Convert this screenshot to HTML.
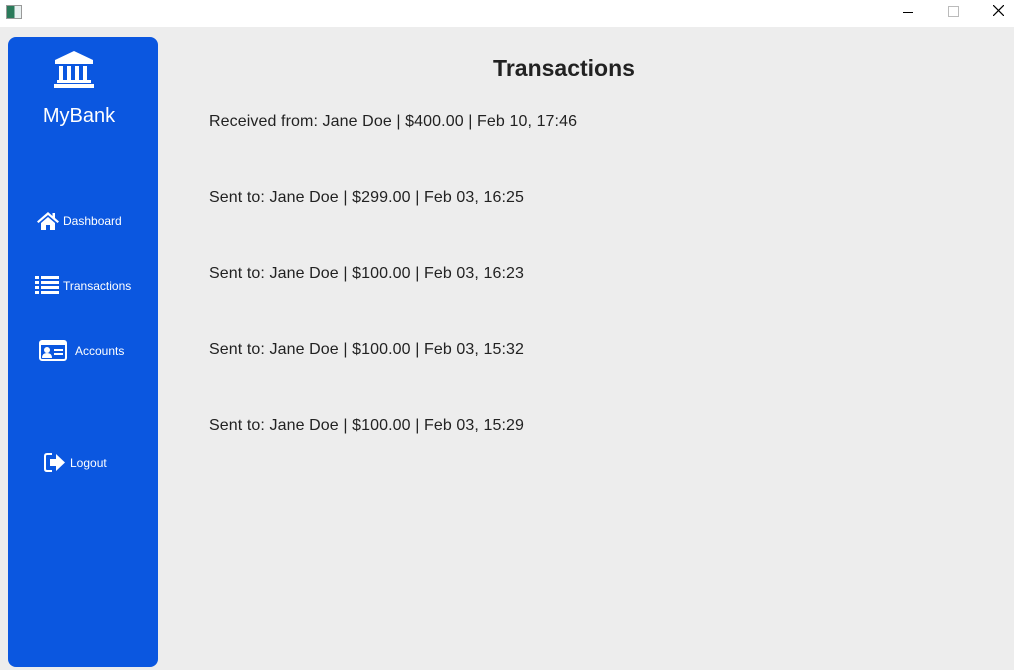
<!DOCTYPE html>
<html><head><style>
body{margin:0;width:1014px;height:670px;background:#ededed;font-family:"Liberation Sans",sans-serif;position:relative;overflow:hidden}
.tb{position:absolute;left:0;top:0;width:1014px;height:27px;background:#fff}
.sb{position:absolute;left:8px;top:37px;width:150px;height:630px;background:#0b57e0;border-radius:8px;color:#fff}
.t{position:absolute;color:#222;font-size:16px;left:209px;letter-spacing:0.1px}
.nav{position:absolute;font-size:12px;color:#fff;display:flex;align-items:center}
</style></head><body>
<div class="tb">
<div style="position:absolute;left:6px;top:5px;width:14px;height:12px;border:1px solid #999;background:linear-gradient(90deg,#2a7a5a 0 55%,#e8f0f0 55%)"></div>
<div style="position:absolute;left:903px;top:12px;width:10px;height:1px;background:#000"></div>
<div style="position:absolute;left:948px;top:6px;width:9px;height:9px;border:1px solid #bbb"></div>
<svg style="position:absolute;left:993px;top:5px" width="11" height="11"><path d="M0 0L11 11M11 0L0 11" stroke="#000" stroke-width="1.2"/></svg>
</div>
<div class="sb">
<svg style="position:absolute;left:46px;top:14px" width="40" height="37" viewBox="0 0 40 37"><path d="M20 0L39 9V13H1V9Z" fill="#fff"/><rect x="5" y="15" width="4" height="14" fill="#fff"/><rect x="13" y="15" width="4" height="14" fill="#fff"/><rect x="21" y="15" width="4" height="14" fill="#fff"/><rect x="29" y="15" width="4" height="14" fill="#fff"/><rect x="3" y="29" width="34" height="3" fill="#fff"/><rect x="0" y="33" width="40" height="4" fill="#fff"/></svg>
<div style="position:absolute;left:0;width:142px;text-align:center;top:68px;font-size:20px">MyBank</div>
<div class="nav" style="left:29px;top:175px"><svg width="22" height="18" viewBox="0 0 22 18"><path d="M11 0L0 9.5L1.5 11L11 3L20.5 11L22 9.5L18 6V1H15.5V4Z" fill="#fff"/><path d="M4 11L11 5L18 11V18H13V13H9V18H4Z" fill="#fff"/></svg><span style="margin-left:4px">Dashboard</span></div>
<div class="nav" style="left:27px;top:239px"><svg width="24" height="19" viewBox="0 0 24 19"><g fill="#fff"><rect x="0" y="0" width="4" height="3"/><rect x="6" y="0" width="18" height="3"/><rect x="0" y="5" width="4" height="3"/><rect x="6" y="5" width="18" height="3"/><rect x="0" y="10" width="4" height="3"/><rect x="6" y="10" width="18" height="3"/><rect x="0" y="15" width="4" height="3"/><rect x="6" y="15" width="18" height="3"/></g></svg><span style="margin-left:4px">Transactions</span></div>
<div class="nav" style="left:31px;top:303px"><svg width="28" height="21" viewBox="0 0 28 21"><rect x="1" y="1" width="26" height="19" rx="2" fill="none" stroke="#fff" stroke-width="2"/><rect x="1" y="1" width="26" height="4" fill="#fff"/><circle cx="8" cy="10" r="3" fill="#fff"/><path d="M3 18Q3 13 8 13Q13 13 13 18Z" fill="#fff"/><rect x="15" y="9" width="9" height="2" fill="#fff"/><rect x="15" y="13" width="9" height="2" fill="#fff"/></svg><span style="margin-left:8px">Accounts</span></div>
<div class="nav" style="left:36px;top:416px"><svg width="22" height="19" viewBox="0 0 22 19"><path d="M8 1H3Q1 1 1 3V16Q1 18 3 18H8" fill="none" stroke="#fff" stroke-width="2"/><path d="M6 6H12V1L21 9.5L12 18V13H6Z" fill="#fff"/></svg><span style="margin-left:4px">Logout</span></div>
</div>
<div style="position:absolute;left:158px;width:812px;text-align:center;top:55px;font-size:23px;font-weight:bold;color:#222">Transactions</div>
<div class="t" style="top:113px">Received from: Jane Doe | $400.00 | Feb 10, 17:46</div>
<div class="t" style="top:189px">Sent to: Jane Doe | $299.00 | Feb 03, 16:25</div>
<div class="t" style="top:265px">Sent to: Jane Doe | $100.00 | Feb 03, 16:23</div>
<div class="t" style="top:341px">Sent to: Jane Doe | $100.00 | Feb 03, 15:32</div>
<div class="t" style="top:417px">Sent to: Jane Doe | $100.00 | Feb 03, 15:29</div>
</body></html>
